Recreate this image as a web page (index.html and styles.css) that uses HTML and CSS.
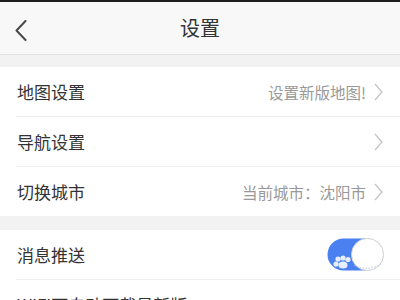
FILE: index.html
```html
<!DOCTYPE html>
<html lang="zh-CN">
<head>
<meta charset="utf-8">
<title>设置</title>
<link rel="stylesheet" href="styles.css">
</head>
<body>
<div class="statusbar"></div>
<header class="navbar">
  <span class="back">
    <svg width="12" height="21" viewBox="0 0 12 21"><path d="M10.5 1 L1.5 10.5 L10.5 20" fill="none" stroke="#4a4a4a" stroke-width="2" stroke-linecap="round" stroke-linejoin="round"/></svg>
  </span>
  <h1 class="title">设置</h1>
</header>
<section class="group">
  <div class="row">
    <span class="label">地图设置</span>
    <span class="value">设置新版地图!</span>
    <svg class="chev" width="9" height="18" viewBox="0 0 9 18"><path d="M1 1 L8 9 L1 17" fill="none" stroke="#c4c4c4" stroke-width="1.3"/></svg>
  </div>
  <div class="row">
    <span class="label">导航设置</span>
    <span class="value"></span>
    <svg class="chev" width="9" height="18" viewBox="0 0 9 18"><path d="M1 1 L8 9 L1 17" fill="none" stroke="#c4c4c4" stroke-width="1.3"/></svg>
  </div>
  <div class="row">
    <span class="label">切换城市</span>
    <span class="value">当前城市：沈阳市</span>
    <svg class="chev" width="9" height="18" viewBox="0 0 9 18"><path d="M1 1 L8 9 L1 17" fill="none" stroke="#c4c4c4" stroke-width="1.3"/></svg>
  </div>
</section>
<section class="group">
  <div class="row">
    <span class="label">消息推送</span>
    <span class="value"></span>
    <svg class="toggle" width="57" height="33" viewBox="0 0 57 33">
      <rect x="0.5" y="0.5" width="56" height="32" rx="16" fill="#4a80f0"/>
      <circle cx="9" cy="26" r="2.6" fill="#e8eefc"/>
      <circle cx="11" cy="21" r="2.6" fill="#e8eefc"/>
      <circle cx="16" cy="20" r="2.6" fill="#e8eefc"/>
      <circle cx="21" cy="21.5" r="2.6" fill="#e8eefc"/>
      <ellipse cx="16" cy="27" rx="4.5" ry="3.5" fill="#e8eefc"/>
      <circle cx="40.5" cy="16.5" r="16" fill="#ffffff" stroke="#d6d6d6" stroke-width="1"/>
      <path d="M27 27 Q40 34 54 26" fill="none" stroke="#b8c4dc" stroke-width="1" stroke-dasharray="1.5 1.5"/>
    </svg>
  </div>
  <div class="row">
    <span class="label">WIFI下自动下载最新版</span>
  </div>
</section>
</body>
</html>
```

FILE: styles.css
```css
html, body {
  margin: 0;
  padding: 0;
}
body {
  background: #f2f2f2;
  font-family: "Noto Sans CJK SC", "Noto Sans", sans-serif;
  width: 400px;
  height: 300px;
  overflow: hidden;
}
.statusbar {
  height: 2px;
  background: #1e1e1e;
}
.navbar {
  height: 52px;
  background: #f8f8f8;
  border-bottom: 1px solid #e2e2e2;
  display: flex;
  align-items: center;
  justify-content: center;
  position: relative;
}
.back {
  position: absolute;
  left: 15px;
  top: 18px;
  display: flex;
}
.title {
  margin: 0;
  font-size: 20px;
  font-weight: normal;
  color: #333333;
  line-height: 1;
}
.group {
  background: #ffffff;
  margin-top: 12px;
}
.group + .group {
  margin-top: 14px;
}
.row {
  height: 49px;
  display: flex;
  align-items: center;
  padding: 0 17px 0 17px;
  margin-left: 0;
  position: relative;
}
.row + .row::before {
  content: "";
  position: absolute;
  left: 16px;
  right: 0;
  top: -1px;
  height: 1px;
  background: #efefef;
}
.row + .row {
  margin-top: 1px;
}
.label {
  font-size: 17px;
  color: #333333;
  flex: 1;
}
.value {
  font-size: 15.5px;
  color: #999999;
  margin-right: 8px;
}
.chev {
  display: block;
}
.toggle {
  display: block;
  margin-right: -1px;
}
```
